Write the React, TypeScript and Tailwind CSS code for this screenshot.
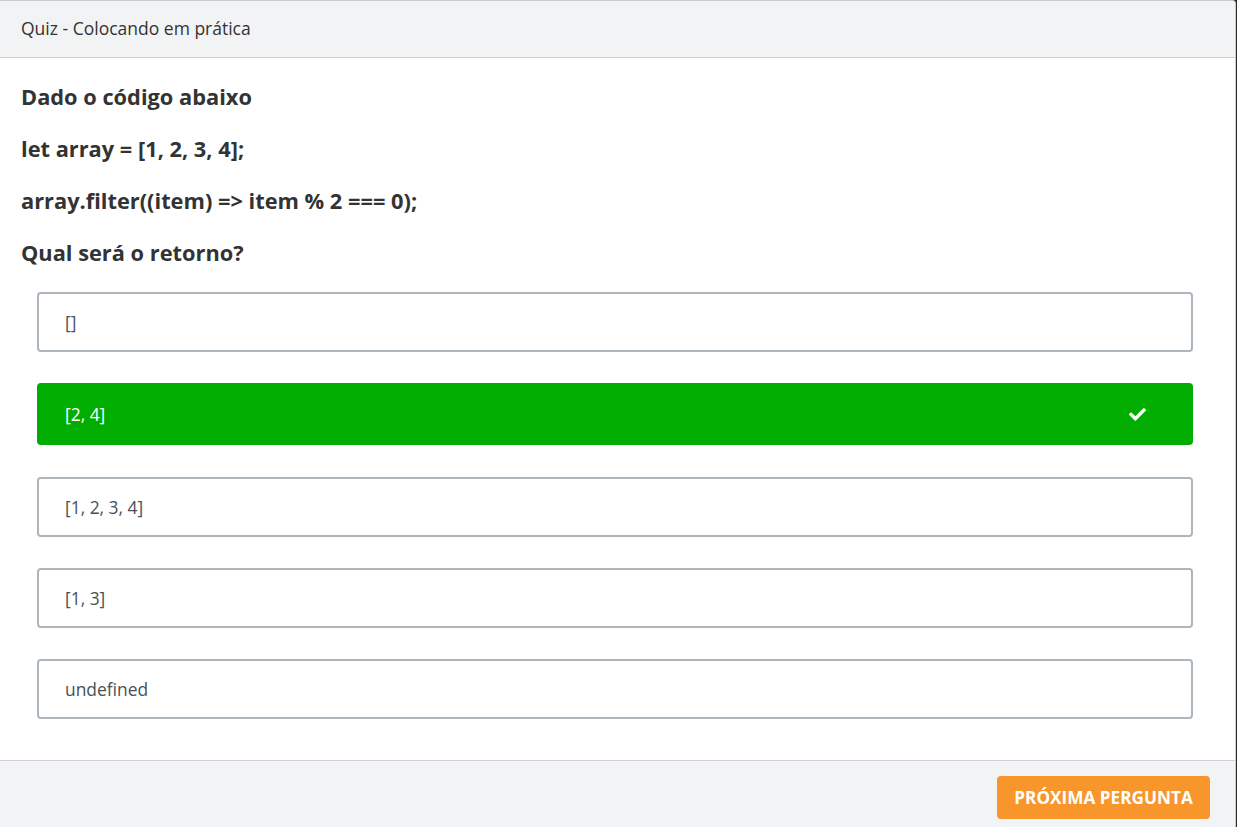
const options = [
  { label: "[]", correct: false },
  { label: "[2, 4]", correct: true },
  { label: "[1, 2, 3, 4]", correct: false },
  { label: "[1, 3]", correct: false },
  { label: "undefined", correct: false },
];

function CheckIcon() {
  return (
    <svg width="17" height="13" viewBox="0 0 512 384" fill="white">
      <path d="M173.9 374.6 7.5 208.2c-10-10-10-26.2 0-36.2l36.2-36.2c10-10 26.2-10 36.2 0L192 247.9 432.1 7.5c10-10 26.2-10 36.2 0l36.2 36.2c10 10 10 26.2 0 36.2L210.1 374.6c-10 10-26.2 10-36.2 0z" />
    </svg>
  );
}

export default function App() {
  return (
    <div
      className="w-[1237px] h-[827px] bg-[#2b2b2b] overflow-hidden"
      style={{ fontFamily: '"Open Sans", sans-serif' }}
    >
      <div className="w-[1236px] h-[827px] bg-white flex flex-col border-t border-r border-[#c9ccd1] rounded-tr-[4px] overflow-hidden">
        {/* Header */}
        <div className="h-[57px] shrink-0 bg-[#f2f3f5] border-b border-[#cdd0d4] flex items-center pl-[21px]">
          <span className="text-[17.5px] text-[#333] leading-none">Quiz - Colocando em prática</span>
        </div>

        {/* Body */}
        <div className="flex-1 pt-[24px] pl-[21px] pr-[42px]">
          <div className="font-bold text-[21.8px] text-[#333] leading-[30px]">
            <p className="mb-[22px]">Dado o código abaixo</p>
            <p className="mb-[22px]">let array = [1, 2, 3, 4];</p>
            <p className="mb-[22px]">array.filter((item) =&gt; item % 2 === 0);</p>
            <p className="mb-[24px]">Qual será o retorno?</p>
          </div>

          <div className="pl-[16px]">
            {options.map((o) =>
              o.correct ? (
                <div
                  key={o.label}
                  className="h-[62px] mb-[32px] rounded-[4px] bg-[#00ad00] flex items-center justify-between pl-[28px] pr-[47px]"
                >
                  <span className="text-[17.4px] text-white">{o.label}</span>
                  <CheckIcon />
                </div>
              ) : (
                <div
                  key={o.label}
                  className="h-[60px] mb-[31px] rounded-[4px] border-2 border-[#adb5bd] flex items-center pl-[26px]"
                >
                  <span className="text-[17.4px] text-[#495057]">{o.label}</span>
                </div>
              )
            )}
          </div>
        </div>

        {/* Footer */}
        <div className="h-[67px] shrink-0 bg-[#f2f3f5] border-t border-[#cdd0d4] flex justify-end pt-[15px] pr-[25px]">
          <button className="h-[43px] w-[213px] rounded-[4px] bg-[#f8962c] text-white font-bold text-[17.2px] uppercase">
            Próxima pergunta
          </button>
        </div>
      </div>
    </div>
  );
}
